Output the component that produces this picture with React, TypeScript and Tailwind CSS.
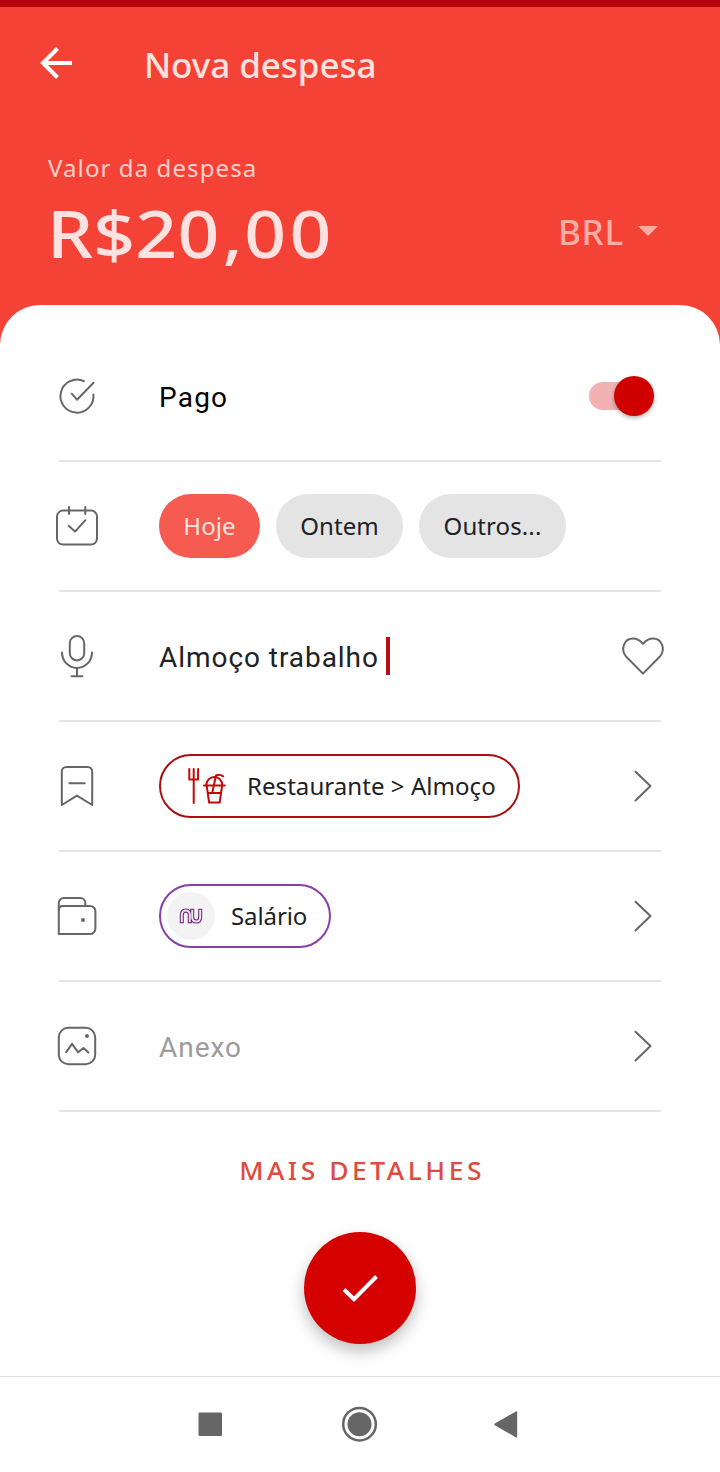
import React from 'react';

// Shared frame for the line icons in the list
const LineIcon = ({ children, className = "" }: { children: React.ReactNode; className?: string }) => (
  <svg
    viewBox="0 0 48 48"
    className={`size-12 shrink-0 ${className}`}
    fill="none"
    stroke="#666666"
    strokeWidth={2}
    strokeLinecap="round"
    strokeLinejoin="round"
  >
    {children}
  </svg>
);

const PaidIcon = () => (
  <LineIcon>
    <path d="M31 9.2A16.5 16.5 0 1 0 40.4 22.4" />
    <path d="M18.7 21.7l5.3 6L40.6 10.7" />
  </LineIcon>
);

const CalendarIcon = () => (
  <LineIcon>
    <rect x="4" y="8.6" width="40" height="34" rx="6" />
    <path d="M16 5v7M32.3 5v7M15.6 23.8l6.4 5.8L32.4 18.2" />
  </LineIcon>
);

const MicIcon = () => (
  <LineIcon>
    <rect x="16.8" y="4" width="14.4" height="24.4" rx="7.2" />
    <path d="M9 20.4a15 15.6 0 0 0 30 0M24 36v8M18.6 44.3h10.8" />
  </LineIcon>
);

const BookmarkIcon = () => (
  <LineIcon>
    <path d="M8.8 43V9.5a4.5 4.5 0 0 1 4.5-4.5h21.4a4.5 4.5 0 0 1 4.5 4.5V43L24 33.6z" />
    <path d="M16.3 21.2h15.4" />
  </LineIcon>
);

const WalletIcon = () => (
  <LineIcon>
    <path d="M5.8 42V17.5a3.5 3.5 0 0 1 3.5-3.5H37a5.4 5.4 0 0 1 5.4 5.4V36.6A5.4 5.4 0 0 1 37 42z" />
    <path d="M5.8 18V11a5 5 0 0 1 5-5h16.5a5 5 0 0 1 5 5v3" />
    <circle cx="30" cy="28" r="1" fill="#666666" />
  </LineIcon>
);

const ImageIcon = () => (
  <LineIcon>
    <rect x="5.8" y="5.8" width="36.4" height="36.4" rx="9.5" />
    <path d="M13 30.3l6-8.5 6.2 8.5L30.5 26l5 4.5" />
    <circle cx="34" cy="14" r="1" fill="#666666" />
  </LineIcon>
);

const HeartIcon = () => (
  <LineIcon>
    <path d="M24 41.6L7.3 24.8C1 17.5 5 6.6 14 6.6c4.2 0 7.2 2 10 5.2 2.8-3.2 5.8-5.2 10-5.2 9 0 13 10.9 6.7 18.2z" />
  </LineIcon>
);

const ChevronIcon = () => (
  <LineIcon>
    <path d="M16.5 9.8L31.5 24 16.5 38.5" />
  </LineIcon>
);

const FoodIcon = () => (
  <svg viewBox="0 0 40 44" className="h-11 w-10 shrink-0" fill="none" stroke="#c20a0a" strokeWidth={2} strokeLinecap="round" strokeLinejoin="round">
    <path d="M1.3 5v10.6h8.8V5M5.7 5v34" />
    <path d="M16 21.5h20.8M18.2 21.5a8 8.5 0 0 1 16.2 0M18.7 21.5l2.4 17h10.6l2.4-17M19.8 29h13.2" />
    <path d="M24.3 28.5L28 11.5q3.4-1.6 7.2.8" />
  </svg>
);

const BankLogo = () => (
  <svg viewBox="0 0 24 16" className="h-4 w-6" fill="none">
    <path d="M2.8 15.3V7c0-3 1.5-4.6 4-4.6s4 1.6 4 4.6v8.3M13.2.7V9c0 3 1.5 4.6 4 4.6s4-1.6 4-4.6V.7" stroke="#6d2077" strokeWidth={4} />
    <path d="M2.8 14.3V7c0-3 1.5-4.6 4-4.6s4 1.6 4 4.6v7.3M13.2 1.7V9c0 3 1.5 4.6 4 4.6s4-1.6 4-4.6V1.7" stroke="#ece4ef" strokeWidth={2} />
  </svg>
);

const Row = ({ icon, children, action }: {
  icon: React.ReactNode;
  children: React.ReactNode;
  action?: React.ReactNode;
}) => (
  <div className="mx-[59px] flex h-[130px] items-center border-b-2 border-[#e4e4e4]">
    <div className="-ml-1.5 mr-[58px]">{icon}</div>
    <div className="flex flex-1 items-center">{children}</div>
    {action}
  </div>
);

const DateChip = ({ label, className }: { label: string; className: string }) => (
  <button className={`h-16 rounded-full text-2xl tracking-[0.1px] ${className}`}>{label}</button>
);

export default function App() {
  return (
    <div className="flex h-[1472px] w-[720px] flex-col overflow-hidden bg-[#f44336] font-['Noto_Sans',sans-serif]">
      <div className="h-[7px] bg-[#b8000c]" />

      <header className="h-[298px] text-[#ffe2df]">
        <div className="flex h-28 items-center pl-10">
          <svg viewBox="0 0 32 32" className="size-8" fill="none" stroke="#ffffff" strokeWidth={4}>
            <path d="M32 16H3M17.5 1.5L3 16l14.5 14.5" />
          </svg>
          <h1 className="ml-[72px] mt-1 text-[35px] font-medium tracking-[-0.05px]">Nova despesa</h1>
        </div>
        <div className="flex items-start justify-between pl-12 pr-[62px]">
          <div>
            <p className="mt-[33px] text-2xl leading-8 tracking-[1.1px] text-[#ffd0cc]">Valor da despesa</p>
            <p className="origin-left scale-x-[1.125] text-[65px] leading-[98px] font-medium tracking-[1.5px]">
              <span className="-ml-px tracking-[0.2px]">R$2</span>
              <span className="tracking-[3px]">0</span>,
              <span className="tracking-[3px]">00</span>
            </p>
          </div>
          <div className="mt-[89px] flex items-center text-[#ffaca6]">
            <span className="text-[35px] leading-[48px] font-medium tracking-[0.8px]">BRL</span>
            <svg viewBox="0 0 20 10" className="-mt-0.5 ml-3.5 h-2.5 w-5" fill="currentColor">
              <path d="M0 0h20L10 10z" />
            </svg>
          </div>
        </div>
      </header>

      <main className="h-[1071px] shrink-0 rounded-t-[40px] bg-white pt-[27px] text-[#202124]">
        <Row
          icon={<PaidIcon />}
          action={
            <div className="mr-[7px] flex h-7 w-[65px] items-center justify-end rounded-full bg-linear-to-r from-[#f2b1b3] from-85% to-transparent to-85%">
              <span className="size-10 shrink-0 rounded-full bg-[#d00000] shadow-[0_2px_4px_rgba(0,0,0,0.3)]" />
            </div>
          }
        >
          <span className="mt-1 font-[Roboto,sans-serif] text-[28px] tracking-[1.2px] text-black">Pago</span>
        </Row>

        <Row icon={<CalendarIcon />}>
          <div className="flex gap-4">
            <DateChip label="Hoje" className="w-[101px] bg-[#f55b50] text-[#ffe2df]" />
            <DateChip label="Ontem" className="w-[127px] bg-[#e4e4e4]" />
            <DateChip label="Outros..." className="w-[147px] bg-[#e4e4e4]" />
          </div>
        </Row>

        <Row icon={<MicIcon />} action={<div className="-mr-1.5"><HeartIcon /></div>}>
          <span className="mt-1 font-[Roboto,sans-serif] text-[28px] tracking-[0.95px]">Almoço trabalho</span>
          <span className="ml-[7px] h-[38px] w-1 bg-[#b80d12]" />
        </Row>

        <Row icon={<BookmarkIcon />} action={<div className="-mr-1.5"><ChevronIcon /></div>}>
          <button className="flex h-16 w-[361px] items-center rounded-full border-2 border-[#a80f12] pl-[27px]">
            <FoodIcon />
            <span className="ml-[19px] text-2xl tracking-[0.06px] whitespace-nowrap">Restaurante &gt; Almoço</span>
          </button>
        </Row>

        <Row icon={<WalletIcon />} action={<div className="-mr-1.5"><ChevronIcon /></div>}>
          <button className="flex h-16 w-[172px] items-center rounded-full border-2 border-[#873fa9] pl-1.5">
            <span className="flex size-12 items-center justify-center rounded-full bg-[#f3f3f3]">
              <BankLogo />
            </span>
            <span className="ml-4 text-2xl tracking-[-0.1px]">Salário</span>
          </button>
        </Row>

        <Row icon={<ImageIcon />} action={<div className="-mr-1.5"><ChevronIcon /></div>}>
          <span className="mt-1 font-[Roboto,sans-serif] text-[28px] tracking-[0.95px] text-[#9c9c9c]">Anexo</span>
        </Row>

        <div className="flex flex-col items-center">
          <button className="mb-0.5 h-[118px] scale-x-[1.06] pl-[3px] text-[25px] font-medium tracking-[3.3px] text-[#de4b40]">MAIS DETALHES</button>
          <button className="flex size-28 items-center justify-center rounded-full bg-[#d50000] shadow-[0_7px_16px_rgba(0,0,0,0.26)]">
            <svg viewBox="0 0 36 28" className="h-7 w-9" fill="none" stroke="#ffffff" strokeWidth={4}>
              <path d="M2 15.5L12 25.2 34.5 2.5" />
            </svg>
          </button>
        </div>
      </main>

      {/* Android navigation bar */}
      <nav className="flex h-24 shrink-0 items-center border-t border-[#e0e0e0] bg-white pb-px pl-[198px] text-[#666666]">
        <svg viewBox="0 0 24 24" className="size-6" fill="currentColor">
          <rect x="0.5" y="0.5" width="23.5" height="23.5" rx="1" />
        </svg>
        <svg viewBox="0 0 36 36" className="ml-[120px] size-9" fill="none">
          <circle cx="17.5" cy="18.2" r="16.3" stroke="currentColor" strokeWidth={2.5} />
          <circle cx="17.5" cy="18.2" r="12" fill="currentColor" />
        </svg>
        <svg viewBox="0 0 24 28" className="ml-[116px] h-7 w-6" fill="currentColor">
          <path d="M.8 13.6Q0 14.4.8 15.2L22 27.4q1.2.4 1.2-.8V2.2q0-1.2-1.2-.8z" />
        </svg>
      </nav>
    </div>
  );
}
